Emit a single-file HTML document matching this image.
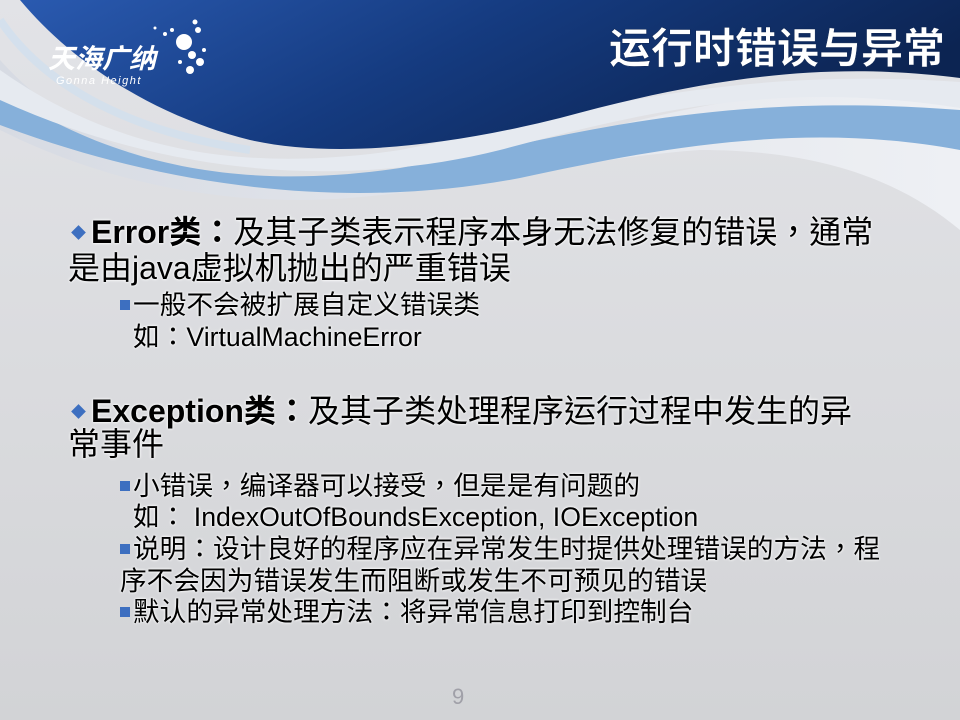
<!DOCTYPE html>
<html><head><meta charset="utf-8"><style>
html,body{margin:0;padding:0}
body{width:960px;height:720px;position:relative;overflow:hidden;background:linear-gradient(180deg,#e2e3e7 0%,#d9dadd 60%,#d2d3d6 100%);font-family:"Liberation Sans","Noto Sans CJK TC",sans-serif;color:#000}
.l{position:absolute;white-space:nowrap;text-shadow:0 0 3px #fff,0 0 2px #fff}
.m{font-size:32px;height:36px;line-height:36px}
.s{font-size:26.7px;height:32px;line-height:32px}
.d{display:inline-block;width:13px;height:13px;background:#3d6fc0;transform:rotate(45deg) scale(.8);margin-right:6px;vertical-align:4px}
.q{display:inline-block;width:10px;height:10px;background:#3d6fc0;margin-right:3px;vertical-align:4px}
b{font-weight:bold}
</style></head><body>
<svg width="960" height="240" style="position:absolute;left:0;top:0">
<defs>
<linearGradient id="g" x1="0" y1="0" x2="1" y2="0.3">
<stop offset="0" stop-color="#2a5ab0"/><stop offset="0.5" stop-color="#153b80"/><stop offset="1" stop-color="#0c2452"/></linearGradient>
<linearGradient id="w" x1="0" y1="0" x2="1" y2="0">
<stop offset="0" stop-color="#d7dbe3"/><stop offset="1" stop-color="#eef0f4"/></linearGradient>
</defs>
<path d="M0 60 C100 170 250 200 400 180 C560 150 700 80 960 85 L960 230 C900 180 820 150 700 150 C560 160 420 200 300 200 C180 200 80 170 0 130Z" fill="url(#w)"/>
<path d="M0 90 C120 170 250 190 400 168 C560 140 700 90 960 110 L960 150 C800 120 650 150 520 178 C380 205 200 200 0 125Z" fill="#86b0da"/>
<path d="M0 70 C120 155 250 172 400 150 C560 120 700 65 960 82 L960 108 C780 80 650 110 500 150 C360 185 180 182 0 100Z" fill="#e6eaf0"/>
<path d="M20 0 L960 0 L960 78 C820 60 700 80 560 118 C440 148 330 158 250 140 C150 115 70 60 20 0Z" fill="url(#g)"/>
<path d="M0 20 C40 80 120 130 250 150" stroke="#cfe0f0" stroke-width="8" fill="none" opacity=".7"/>
<circle cx="184" cy="42" r="8" fill="#fff"/><circle cx="198" cy="30" r="3" fill="#fff"/><circle cx="192" cy="55" r="4" fill="#fff"/><circle cx="200" cy="62" r="4" fill="#fff"/><circle cx="190" cy="70" r="4" fill="#fff"/><circle cx="180" cy="62" r="2" fill="#fff"/><circle cx="165" cy="34" r="2" fill="#fff"/><circle cx="155" cy="28" r="1.5" fill="#fff"/><circle cx="172" cy="30" r="2" fill="#fff"/><circle cx="195" cy="22" r="2.5" fill="#fff"/><circle cx="204" cy="50" r="2" fill="#fff"/>
<text x="48" y="68" font-family="Liberation Sans,Noto Sans CJK SC,sans-serif" font-size="27" font-weight="bold" font-style="italic" fill="#fff">天海广纳</text>
<text x="56" y="84" font-family="Liberation Sans,sans-serif" font-size="11" font-style="italic" fill="#fff" letter-spacing="1.5">Gonna Height</text>
<text x="945" y="63" text-anchor="end" font-family="Liberation Sans,Noto Sans CJK SC,sans-serif" font-size="42" font-weight="bold" fill="#fff" stroke="#0c2452" stroke-width=".5">运行时错误与异常</text>
</svg>
<div class="l m" style="left:72px;top:214px"><span class="d"></span><b>Error类：</b>及其子类表示程序本身无法修复的错误，通常</div>
<div class="l m" style="left:68px;top:250px">是由java虚拟机抛出的严重错误</div>
<div class="l s" style="left:120px;top:289px"><span class="q"></span>一般不会被扩展自定义错误类</div>
<div class="l s" style="left:133px;top:321px">如：VirtualMachineError</div>
<div class="l m" style="left:72px;top:393px"><span class="d"></span><b>Exception类：</b>及其子类处理程序运行过程中发生的异</div>
<div class="l m" style="left:68px;top:426px">常事件</div>
<div class="l s" style="left:120px;top:470px"><span class="q"></span>小错误，编译器可以接受，但是是有问题的</div>
<div class="l s" style="left:133px;top:501px">如： IndexOutOfBoundsException, IOException</div>
<div class="l s" style="left:120px;top:533px"><span class="q"></span>说明：设计良好的程序应在异常发生时提供处理错误的方法，程</div>
<div class="l s" style="left:120px;top:565px">序不会因为错误发生而阻断或发生不可预见的错误</div>
<div class="l s" style="left:120px;top:596px"><span class="q"></span>默认的异常处理方法：将异常信息打印到控制台</div>
<div style="position:absolute;left:452px;top:684px;font-size:22px;color:#a0a0a8">9</div>
</body></html>
